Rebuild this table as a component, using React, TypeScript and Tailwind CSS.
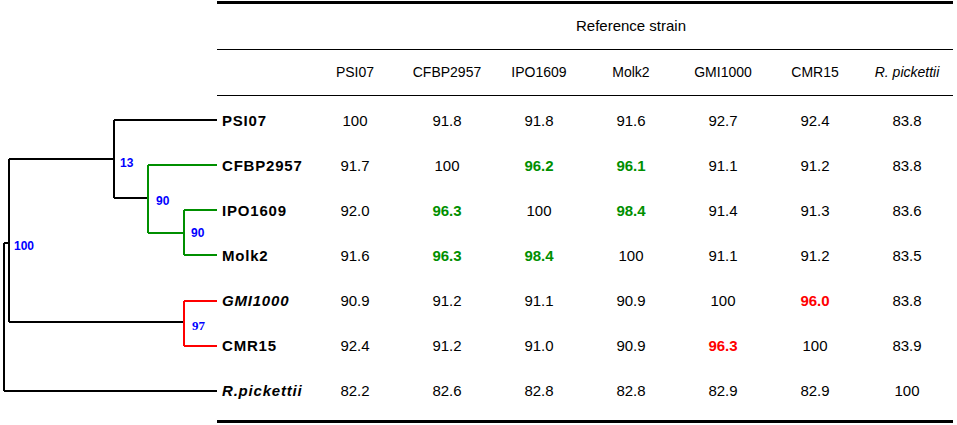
import React from "react";

type Cell = { v: string; c?: "g" | "r" };

const headers = ["PSI07", "CFBP2957", "IPO1609", "Molk2", "GMI1000", "CMR15"];

const rows: { name: string; italic?: boolean; cells: Cell[] }[] = [
  { name: "PSI07", cells: [{ v: "100" }, { v: "91.8" }, { v: "91.8" }, { v: "91.6" }, { v: "92.7" }, { v: "92.4" }, { v: "83.8" }] },
  { name: "CFBP2957", cells: [{ v: "91.7" }, { v: "100" }, { v: "96.2", c: "g" }, { v: "96.1", c: "g" }, { v: "91.1" }, { v: "91.2" }, { v: "83.8" }] },
  { name: "IPO1609", cells: [{ v: "92.0" }, { v: "96.3", c: "g" }, { v: "100" }, { v: "98.4", c: "g" }, { v: "91.4" }, { v: "91.3" }, { v: "83.6" }] },
  { name: "Molk2", cells: [{ v: "91.6" }, { v: "96.3", c: "g" }, { v: "98.4", c: "g" }, { v: "100" }, { v: "91.1" }, { v: "91.2" }, { v: "83.5" }] },
  { name: "GMI1000", italic: true, cells: [{ v: "90.9" }, { v: "91.2" }, { v: "91.1" }, { v: "90.9" }, { v: "100" }, { v: "96.0", c: "r" }, { v: "83.8" }] },
  { name: "CMR15", cells: [{ v: "92.4" }, { v: "91.2" }, { v: "91.0" }, { v: "90.9" }, { v: "96.3", c: "r" }, { v: "100" }, { v: "83.9" }] },
  { name: "R.pickettii", italic: true, cells: [{ v: "82.2" }, { v: "82.6" }, { v: "82.8" }, { v: "82.8" }, { v: "82.9" }, { v: "82.9" }, { v: "100" }] },
];

function Tree() {
  const black = "#000000";
  const green = "#008f00";
  const red = "#ff0000";
  return (
    <svg width="217" height="425" viewBox="0 0 217 425" shapeRendering="crispEdges" className="shrink-0">
      <g fill="none" strokeWidth="2">
        {/* black backbone */}
        <path stroke={black} d="M114 120 H217 M114 120 V198 M9 159 H114 M114 198 H148 M9 159 V322 M9 322 H184 M4 243 H9 M4 243 V391 M4 391 H217" />
        {/* green clade */}
        <path stroke={green} d="M148 165 V233 M148 165 H217 M148 233 H184 M184 210 V255 M184 210 H217 M184 255 H217" />
        {/* red clade */}
        <path stroke={red} d="M184 301 V346 M184 301 H217 M184 346 H217" />
      </g>
      <g fill="#0000ff" fontWeight="bold" fontSize="12" fontFamily="'Liberation Sans', Arial, sans-serif">
        <text x="120" y="167">13</text>
        <text x="156" y="205">90</text>
        <text x="191" y="237">90</text>
        <text x="14" y="250">100</text>
        <text x="192" y="330" fontFamily="'Liberation Serif', serif" fontSize="13">97</text>
      </g>
    </svg>
  );
}

export default function App() {
  return (
    <div className="w-[957px] h-[425px] bg-white flex text-black font-['Liberation_Sans',Arial,sans-serif]">
      <Tree />
      <div className="w-[736px] flex flex-col">
        <div className="mt-[1px] border-t-[3px] border-black h-[48px] grid grid-cols-8 items-center">
          <div />
          <div className="col-span-7 text-center text-[15px]">Reference strain</div>
        </div>
        <div className="border-t border-black h-[46px] grid grid-cols-8 items-center text-[14px]">
          <div />
          {headers.map((h) => (
            <div key={h} className="text-center">{h}</div>
          ))}
          <div className="text-center italic">R. pickettii</div>
        </div>
        <div className="border-t border-black pt-[3px]">
          {rows.map((r) => (
            <div key={r.name} className="h-[45px] grid grid-cols-8 items-center text-[15px]">
              <div className={`pl-[5px] font-bold tracking-[0.8px] ${r.italic ? "italic" : ""}`}>{r.name}</div>
              {r.cells.map((c, i) => (
                <div
                  key={i}
                  className={`text-center ${c.c === "g" ? "font-bold text-[#008f00]" : c.c === "r" ? "font-bold text-[#ff0000]" : ""}`}
                >
                  {c.v}
                </div>
              ))}
            </div>
          ))}
        </div>
        <div className="mt-[6px] border-t-[3px] border-black" />
      </div>
    </div>
  );
}
